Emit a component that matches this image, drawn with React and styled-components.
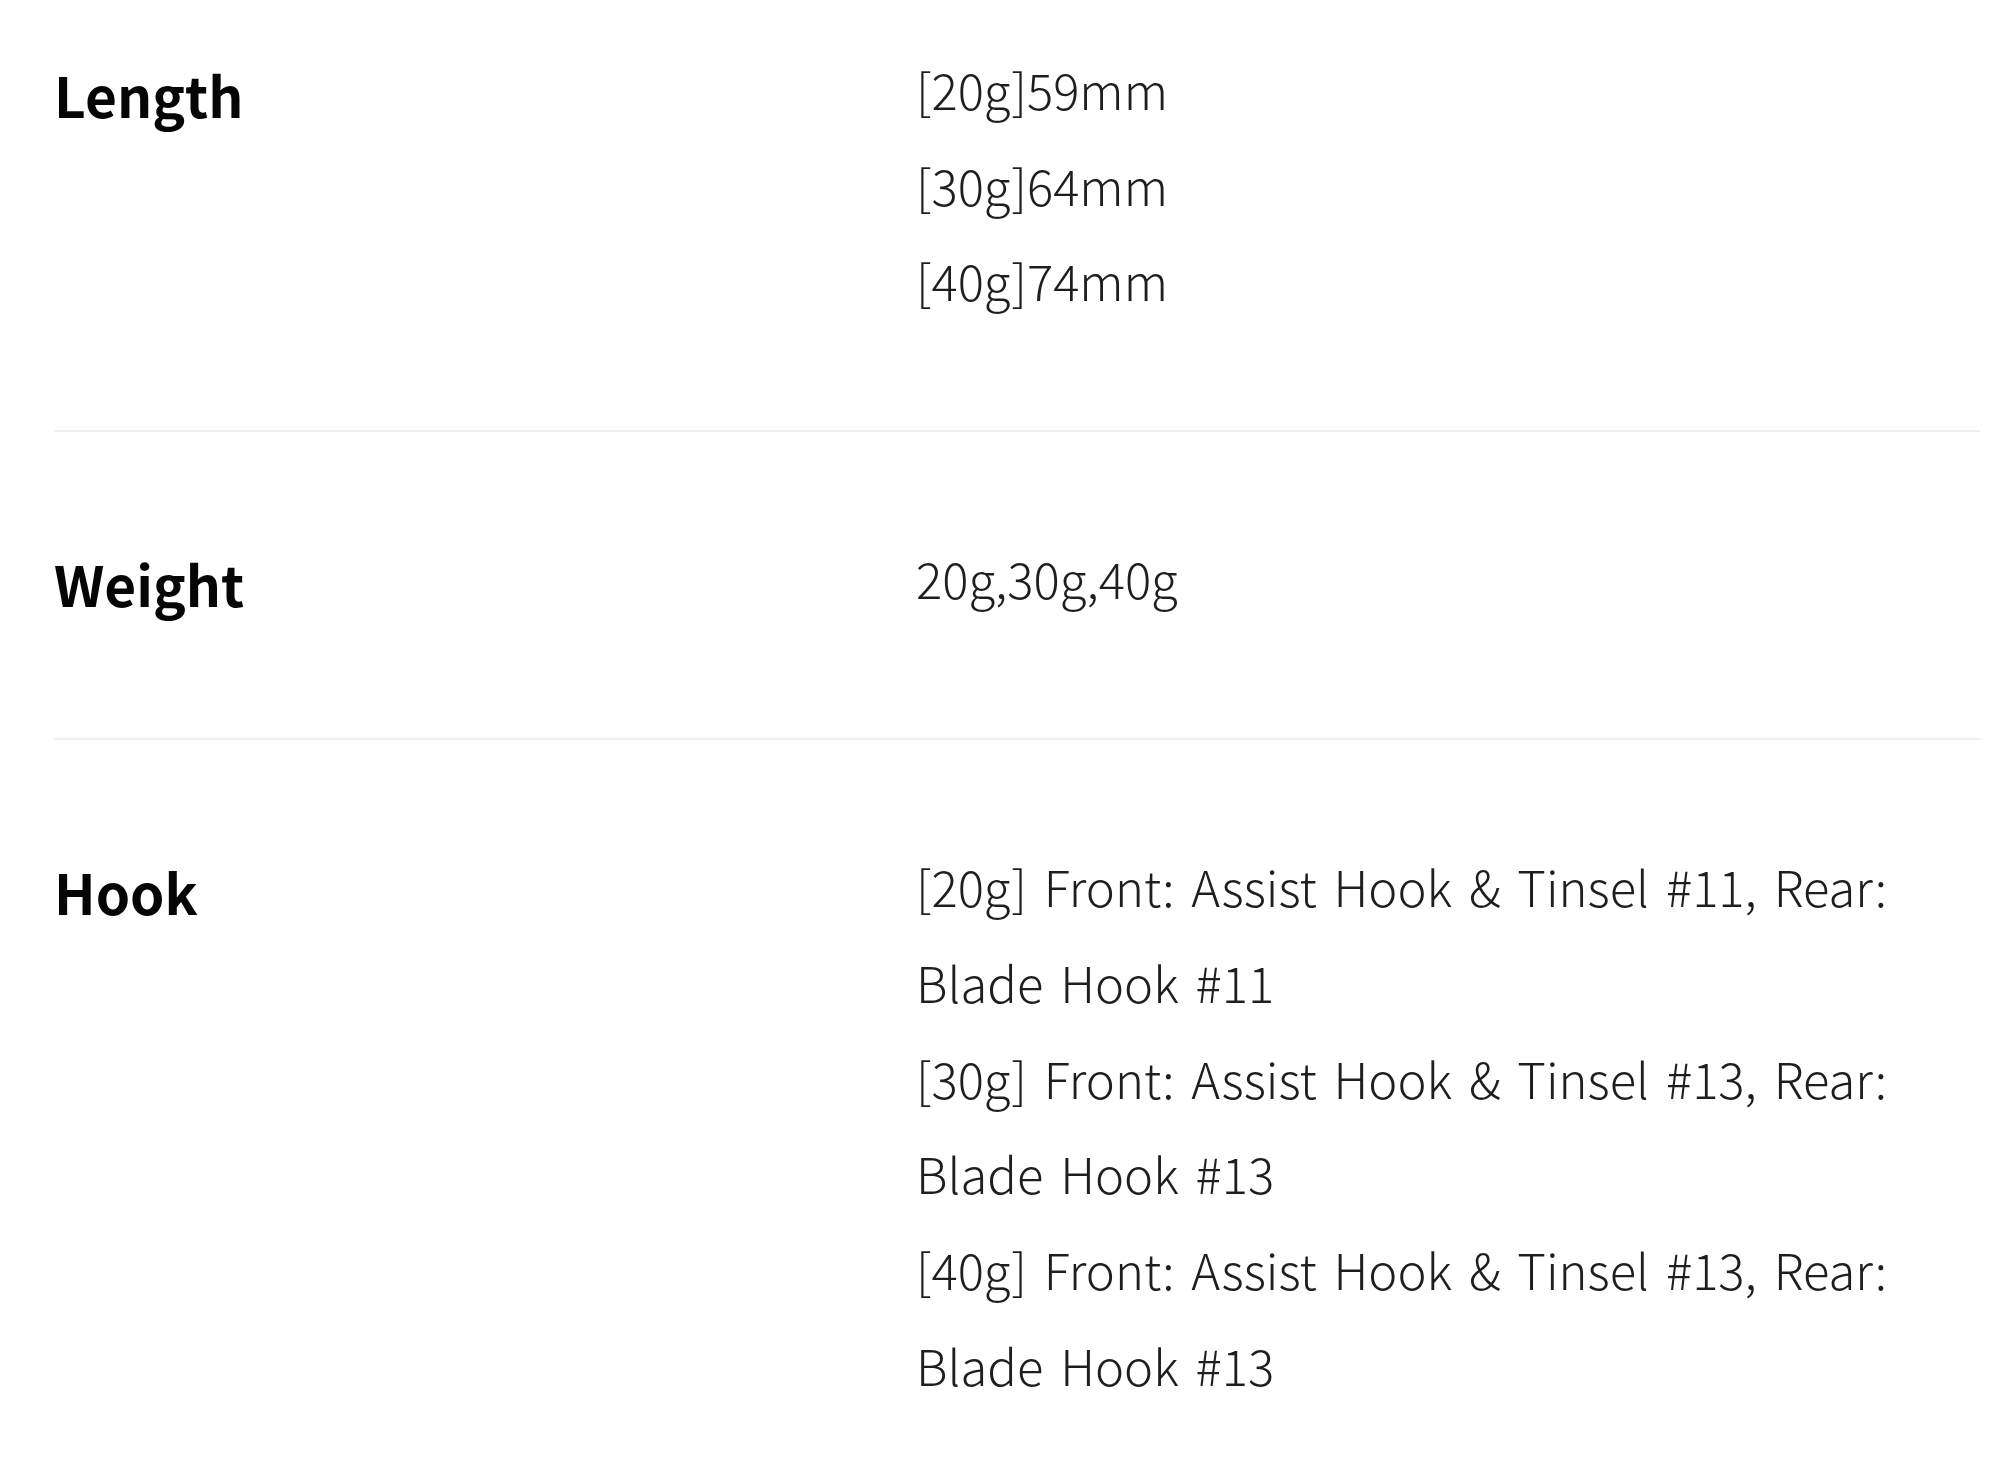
import React from "react";
import styled, { createGlobalStyle } from "styled-components";

const Global = createGlobalStyle`
  html, body { margin: 0; padding: 0; background: #ffffff; }
  body { font-family: "Noto Sans CJK JP", "Noto Sans", sans-serif; }
`;

const Page = styled.div`
  width: 2000px;
  padding: 0 20px 0 54px;
  box-sizing: border-box;
`;

const SpecList = styled.dl`
  margin: 0;
  display: flex;
  flex-direction: column;
`;

const Row = styled.div`
  display: grid;
  grid-template-columns: 862px 1fr;
  align-items: start;
  padding: ${(p) => (p.$first ? "41px" : "98px")} 0 ${(p) => (p.$last ? "60px" : "102px")};
  border-bottom: ${(p) => (p.$last ? "none" : "2px solid #efefef")};
`;

const Label = styled.dt`
  margin: 0;
  font-family: "Noto Sans CJK JP", "Noto Sans", sans-serif;
  font-weight: 700;
  font-size: 55px;
  line-height: 106px;
  color: #050505;
`;

const Values = styled.dd`
  margin: 0;
  display: flex;
  flex-direction: column;
  max-width: 1060px;
`;

const Line = styled.span`
  display: block;
  font-family: "Noto Sans CJK JP", "Noto Sans", sans-serif;
  font-weight: 300;
  font-size: 49px;
  line-height: 95.7px;
  word-spacing: 6px;
  color: #1e1e1e;
`;

const specs = [
  { label: "Length", lines: ["[20g]59mm", "[30g]64mm", "[40g]74mm"] },
  { label: "Weight", lines: ["20g,30g,40g"] },
  {
    label: "Hook",
    lines: [
      "[20g] Front: Assist Hook & Tinsel #11, Rear:",
      "Blade Hook #11",
      "[30g] Front: Assist Hook & Tinsel #13, Rear:",
      "Blade Hook #13",
      "[40g] Front: Assist Hook & Tinsel #13, Rear:",
      "Blade Hook #13",
    ],
  },
];

export default function App() {
  return (
    <Page>
      <Global />
      <SpecList>
        {specs.map((s, i) => (
          <Row key={s.label} $first={i === 0} $last={i === specs.length - 1}>
            <Label>{s.label}</Label>
            <Values>
              {s.lines.map((l, j) => (
                <Line key={j}>{l}</Line>
              ))}
            </Values>
          </Row>
        ))}
      </SpecList>
    </Page>
  );
}
